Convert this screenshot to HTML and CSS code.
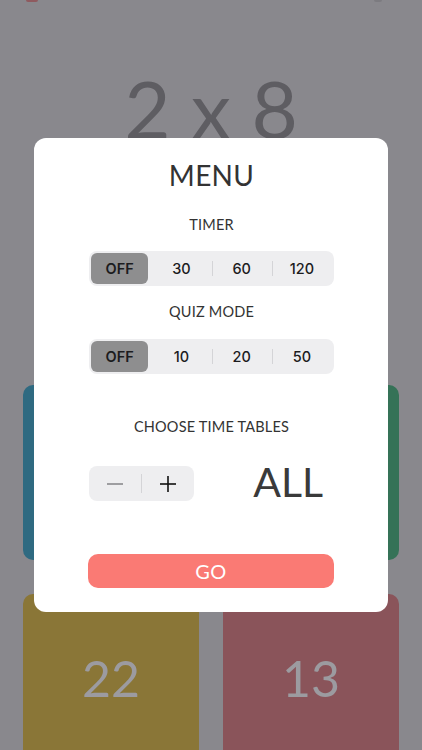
FILE: index.html
```html
<!DOCTYPE html>
<html>
<head>
<meta charset="utf-8">
<link rel="stylesheet" href="styles.css">
</head>
<body>
<div class="screen">
  <div class="topbar">
    <span class="top-mark red"></span>
    <span class="top-mark gray"></span>
  </div>
  <div class="question">2 x 8</div>
  <div class="grid">
    <div class="card blue"></div>
    <div class="card green"></div>
    <div class="card yellow"><span>22</span></div>
    <div class="card rose"><span>13</span></div>
  </div>

  <div class="modal">
    <h1 class="title">MENU</h1>
    <div class="label label-timer">TIMER</div>
    <div class="seg seg-timer">
      <div class="seg-item active">OFF</div>
      <div class="seg-item">30</div>
      <div class="seg-item div">60</div>
      <div class="seg-item div">120</div>
    </div>
    <div class="label label-quiz">QUIZ MODE</div>
    <div class="seg seg-quiz">
      <div class="seg-item active">OFF</div>
      <div class="seg-item">10</div>
      <div class="seg-item div">20</div>
      <div class="seg-item div">50</div>
    </div>
    <div class="label label-tables">CHOOSE TIME TABLES</div>
    <div class="tables-row">
      <div class="stepper">
        <div class="step minus">
          <svg width="18" height="18" viewBox="0 0 18 18"><line x1="1" y1="9" x2="17" y2="9" stroke="#8a8a8e" stroke-width="1.6"/></svg>
        </div>
        <div class="step-div"></div>
        <div class="step plus">
          <svg width="18" height="18" viewBox="0 0 18 18"><line x1="1" y1="9" x2="17" y2="9" stroke="#111" stroke-width="1.6"/><line x1="9" y1="1" x2="9" y2="17" stroke="#111" stroke-width="1.6"/></svg>
        </div>
      </div>
      <div class="all">ALL</div>
    </div>
    <button class="go">GO</button>
  </div>
</div>
</body>
</html>
```
FILE: styles.css
```css
html, body {
  margin: 0;
  padding: 0;
}
body {
  background: #89888d;
  font-family: Lato, "Noto Sans", sans-serif;
}
.screen {
  position: relative;
  width: 422px;
  height: 750px;
  overflow: hidden;
  background: #89888d;
}
.topbar {
  height: 2px;
  display: flex;
  justify-content: space-between;
  padding: 0 40px 0 26px;
}
.top-mark {
  display: block;
  height: 2px;
  border-radius: 0 0 2px 2px;
}
.top-mark.red { width: 12px; background: #8f5a5f; }
.top-mark.gray { width: 8px; background: #7c7b80; }
.question {
  margin-top: 61px;
  text-align: center;
  font-size: 80px;
  line-height: 90px;
  color: #5e5d62;
  font-weight: 400;
}
.grid {
  display: grid;
  grid-template-columns: 176px 176px;
  grid-auto-rows: 175px;
  column-gap: 24px;
  row-gap: 34px;
  padding: 0 23px;
  margin-top: 232px;
}
.card {
  border-radius: 10px;
  display: flex;
  align-items: center;
  justify-content: center;
  font-size: 50px;
  color: #9c9ba0;
}
.card span { margin-bottom: 8px; }
.blue { background: #2f6a81; }
.green { background: #357257; }
.yellow { background: #8a7637; }
.rose { background: #8a545a; }

.modal {
  position: absolute;
  left: 34px;
  top: 138px;
  width: 354px;
  box-sizing: border-box;
  padding: 0 54px 24px 55px;
  background: #fff;
  border-radius: 12px;
  display: flex;
  flex-direction: column;
  align-items: stretch;
}
.title {
  margin: 21px 0 0;
  text-align: center;
  font-size: 28px;
  line-height: 32px;
  font-weight: 400;
  color: #333;
  letter-spacing: 0.3px;
}
.label {
  text-align: center;
  font-size: 14.5px;
  line-height: 20px;
  color: #333;
  letter-spacing: 0.2px;
}
.label-timer { margin-top: 24px; }
.label-quiz { margin-top: 16px; }
.label-tables { margin-top: 43px; }
.seg {
  height: 35px;
  background: #eeeef0;
  border-radius: 8px;
  display: grid;
  grid-template-columns: repeat(4, 1fr);
  padding: 2px;
  box-sizing: border-box;
}
.seg-timer { margin-top: 16px; }
.seg-quiz { margin-top: 17px; }
.seg-item {
  position: relative;
  display: flex;
  align-items: center;
  justify-content: center;
  font-family: Inter, Roboto, sans-serif;
  font-size: 14.5px;
  font-weight: 500;
  color: #1c1c1e;
}
.seg-item.active {
  background: #8e8e8f;
  border-radius: 6px;
  font-weight: 600;
  margin-right: 3px;
}
.seg-item.div::before {
  content: "";
  position: absolute;
  left: 0;
  top: 8px;
  bottom: 8px;
  width: 1px;
  background: #d4d4d7;
}
.tables-row {
  margin-top: 29px;
  height: 35px;
  display: flex;
  align-items: center;
  justify-content: space-between;
}
.stepper {
  width: 105px;
  height: 35px;
  background: #eeeef0;
  border-radius: 8px;
  display: flex;
  align-items: center;
}
.step {
  flex: 1;
  display: flex;
  align-items: center;
  justify-content: center;
}
.step svg { display: block; }
.step-div {
  width: 1px;
  height: 19px;
  background: #d4d4d7;
}
.all {
  font-size: 41px;
  line-height: 35px;
  color: #3a3a3a;
  margin-right: 11px;
  margin-bottom: 4px;
}
.go {
  margin-top: 53px;
  margin-left: -1px;
  height: 34px;
  border: none;
  border-radius: 10px;
  background: #fa7a74;
  color: #fff;
  font-family: Lato, "Noto Sans", sans-serif;
  font-size: 20px;
  letter-spacing: 0.5px;
  padding: 0;
}
```
